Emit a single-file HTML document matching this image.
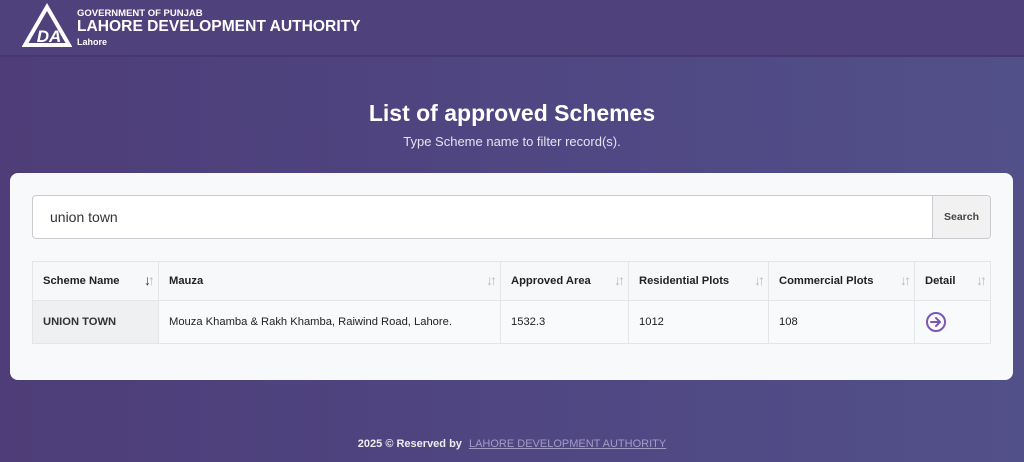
<!DOCTYPE html>
<html><head><meta charset="utf-8">
<style>
*{box-sizing:border-box;margin:0;padding:0}
body{width:1024px;height:462px;overflow:hidden;font-family:"Liberation Sans",sans-serif;background:linear-gradient(90deg,#4e3d78 0%,#4f4682 50%,#525089 100%);position:relative;color:#fff}
.hdr{position:absolute;left:0;top:0;width:1024px;height:57px;background:#4f417c;border-bottom:2px solid #463870}
.t1{position:absolute;left:77px;top:8px;font-size:9.5px;font-weight:bold}
.t2{position:absolute;left:77px;top:18px;font-size:15.6px;font-weight:bold}
.t3{position:absolute;left:77px;top:37px;font-size:9px;font-weight:bold}
h1{position:absolute;top:100px;width:100%;text-align:center;font-size:23px;font-weight:bold}
.sub{position:absolute;top:134px;width:100%;text-align:center;font-size:13px;color:#e6e3f0}
.card{position:absolute;left:10px;top:173px;width:1003px;height:207px;background:#f8f9fa;border-radius:8px}
.inp{position:absolute;left:22px;top:22px;width:959px;height:44px;border:1px solid #c9cbd0;border-radius:4px;background:#fff}
.inp span{position:absolute;left:17px;top:13px;font-size:14px;color:#333}
.btn{position:absolute;right:0;top:0;width:58px;height:42px;background:#f1f1f2;border-left:1px solid #c9cbd0;font-size:10.5px;font-weight:bold;color:#444;text-align:center;line-height:42px;border-radius:0 4px 4px 0}
table{position:absolute;left:22px;top:88px;width:959px;border-collapse:collapse;font-size:11.2px;color:#222}
td,th{border:1px solid #e3e5e8;padding:0 10px;text-align:left;position:relative}
th{height:39px;font-weight:bold;background:#f7f8f9}
td{height:43px;background:#f9fafb}
td.f{background:#eff0f2;font-weight:bold;color:#333}
th i{position:absolute;right:6px;top:10px;font-style:normal;font-size:14px;color:#bbb;letter-spacing:-3px}
th i b{color:#333}
.foot{position:absolute;top:438px;width:100%;text-align:center;font-size:11px;color:#eee;font-weight:bold}
.foot u{color:#a49cc4;margin-left:4px;font-weight:normal}
</style></head><body>
<div class="hdr">
<svg style="position:absolute;left:22px;top:3px" width="50" height="44" viewBox="0 0 50 44"><path d="M25 4 L3 42 L47 42 Z" fill="none" stroke="#fff" stroke-width="4" stroke-linejoin="miter"/><text x="27" y="39" text-anchor="middle" font-family="Liberation Sans" font-weight="bold" font-style="italic" font-size="17" fill="#fff">DA</text></svg>
<div class="t1">GOVERNMENT OF PUNJAB</div>
<div class="t2">LAHORE DEVELOPMENT AUTHORITY</div>
<div class="t3">Lahore</div>
</div>
<h1>List of approved Schemes</h1>
<div class="sub">Type Scheme name to filter record(s).</div>
<div class="card">
<div class="inp"><span>union town</span><div class="btn">Search</div></div>
<table>
<tr><th style="width:126px">Scheme Name<i><b>↓</b>↑</i></th><th style="width:342px">Mauza<i>↓↑</i></th><th style="width:128px">Approved Area<i>↓↑</i></th><th style="width:140px">Residential Plots<i>↓↑</i></th><th style="width:146px">Commercial Plots<i>↓↑</i></th><th>Detail<i>↓↑</i></th></tr>
<tr><td class="f">UNION TOWN</td><td>Mouza Khamba &amp; Rakh Khamba, Raiwind Road, Lahore.</td><td>1532.3</td><td>1012</td><td>108</td><td><svg width="22" height="22" viewBox="0 0 22 22" style="vertical-align:middle"><circle cx="11" cy="11" r="9" fill="none" stroke="#7b55b8" stroke-width="2"/><path d="M6 11 H15 M11 7 L15 11 L11 15" fill="none" stroke="#7b55b8" stroke-width="2" stroke-linecap="round" stroke-linejoin="round"/></svg></td></tr>
</table>
</div>
<div class="foot">2025 © Reserved by <u>LAHORE DEVELOPMENT AUTHORITY</u></div>
</body></html>
